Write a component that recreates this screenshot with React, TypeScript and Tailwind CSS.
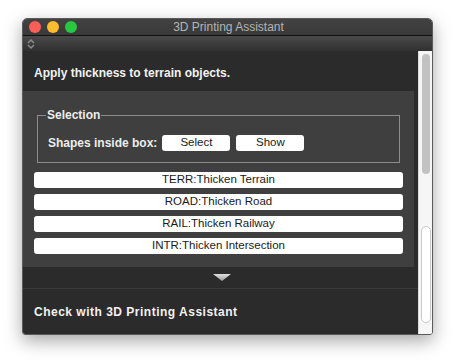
import React from "react";

const ui = { fontFamily: '"Liberation Sans", Arial, sans-serif' };
const btn = { fontFamily: '"Liberation Sans", Arial, sans-serif' };

function ActionButton({ label }: { label: string }) {
  return (
    <div
      className="h-4 w-[369px] rounded-[3px] bg-white flex items-center justify-center text-[11.5px] text-[#1a1a1a] leading-none"
      style={btn}
    >
      {label}
    </div>
  );
}

export default function App() {
  return (
    <div className="w-[456px] h-[362px] bg-white pt-[18px] pl-[22px]">
      <div className="w-[411px] h-[317px] flex flex-col rounded-t-[5px] rounded-b-[3px] border border-[#5a5a5a] shadow-[0_6px_18px_rgba(0,0,0,0.35)] overflow-hidden">
        {/* title bar */}
        <div className="h-[16px] shrink-0 bg-gradient-to-b from-[#434243] to-[#3a393a] flex items-center relative">
          <div className="flex items-center gap-[6px] pl-[6px]">
            <div className="w-3 h-3 rounded-full bg-[#fc5f57]" />
            <div className="w-3 h-3 rounded-full bg-[#fdbc2e]" />
            <div className="w-3 h-3 rounded-full bg-[#27c840]" />
          </div>
          <div
            className="absolute inset-0 flex items-center justify-center text-[12px] text-[#b4b4b4] pl-[2px]"
            style={btn}
          >
            3D Printing Assistant
          </div>
        </div>
        <div className="h-px bg-[#111] shrink-0" />
        {/* toolbar strip */}
        <div className="h-[15px] shrink-0 bg-gradient-to-b from-[#4a4a4a] to-[#303030] flex items-center pl-[3px]">
          <svg width="10" height="12" viewBox="0 0 10 12">
            <path d="M2 5 L5 2 L8 5" fill="none" stroke="#8d8d8d" strokeWidth="1.5" />
            <path d="M2 7 L5 10 L8 7" fill="none" stroke="#8d8d8d" strokeWidth="1.5" />
          </svg>
        </div>
        {/* body */}
        <div className="flex flex-1 min-h-0">
          <div className="w-[395px] flex flex-col bg-[#2b2b2b]">
            <div
              className="h-[40px] flex items-center pl-[11px] pt-[3px] text-[12px] font-bold text-[#f2f2f2]"
              style={ui}
            >
              Apply thickness to terrain objects.
            </div>
            <div className="h-[176px] w-[391px] bg-[#3f3f3f] flex flex-col pt-[24px]">
              <div className="ml-[14px] w-[363px] h-[48px] border border-[#8c8c8c] pl-[10px] pt-[19px] relative">
                <span
                  className="absolute left-[8px] top-[-8px] px-[1px] bg-[#3f3f3f] text-[12px] font-bold text-[#ededed] leading-[14px]"
                  style={ui}
                >
                  Selection
                </span>
                <div className="flex items-center gap-[6px]">
                  <span className="text-[12px] font-bold text-[#ededed] whitespace-nowrap leading-4" style={ui}>
                    Shapes inside box:
                  </span>
                  <div
                    className="w-[68px] h-4 rounded-[3px] bg-white flex items-center justify-center text-[11.5px] text-[#1a1a1a] ml-[-1px]"
                    style={btn}
                  >
                    Select
                  </div>
                  <div
                    className="w-[68px] h-4 rounded-[3px] bg-white flex items-center justify-center text-[11.5px] text-[#1a1a1a]"
                    style={btn}
                  >
                    Show
                  </div>
                </div>
              </div>
              <div className="flex flex-col gap-[6px] pl-[11px] mt-[9px]">
                <ActionButton label="TERR:Thicken Terrain" />
                <ActionButton label="ROAD:Thicken Road" />
                <ActionButton label="RAIL:Thicken Railway" />
                <ActionButton label="INTR:Thicken Intersection" />
              </div>
            </div>
            <div className="h-[22px] flex items-center justify-center border-b border-[#3a3a3a]">
              <svg width="18" height="7" viewBox="0 0 18 7" className="ml-[2px]">
                <defs>
                  <linearGradient id="tg" x1="0" y1="0" x2="0" y2="1">
                    <stop offset="0" stopColor="#e0e0e0" />
                    <stop offset="1" stopColor="#9a9a9a" />
                  </linearGradient>
                </defs>
                <path d="M0 0 L18 0 L9 7 Z" fill="url(#tg)" />
              </svg>
            </div>
            <div
              className="h-[45px] flex items-center pl-[11px] text-[12px] font-bold text-[#f2f2f2] tracking-[0.5px]"
              style={ui}
            >
              Check with 3D Printing Assistant
            </div>
          </div>
          <div className="flex-1 bg-[#f6f6f6] border-l border-[#dcdcdc] flex flex-col items-center pt-[3px]">
            <div className="w-[8px] h-[120px] rounded-full bg-[#c2c2c2]" />
            <div className="w-[10px] h-[97px] rounded-full border border-[#c9c9c9] bg-white mt-[52px]" />
          </div>
        </div>
      </div>
    </div>
  );
}
